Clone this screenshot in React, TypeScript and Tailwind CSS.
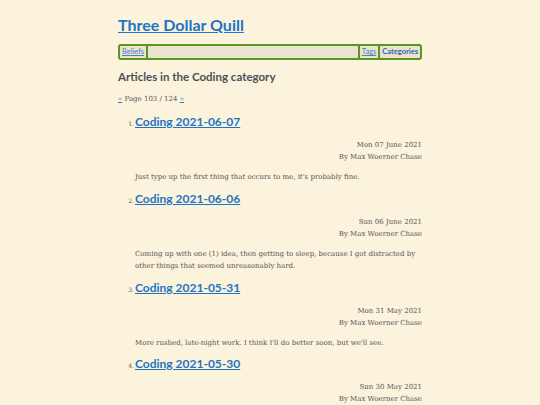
const posts = [
  {
    n: 1,
    title: "Coding 2021-06-07",
    date: "Mon 07 June 2021",
    summary: "Just type up the first thing that occurs to me, it's probably fine.",
  },
  {
    n: 2,
    title: "Coding 2021-06-06",
    date: "Sun 06 June 2021",
    summary:
      "Coming up with one (1) idea, then getting to sleep, because I got distracted by other things that seemed unreasonably hard.",
  },
  {
    n: 3,
    title: "Coding 2021-05-31",
    date: "Mon 31 May 2021",
    summary: "More rushed, late-night work. I think I'll do better soon, but we'll see.",
  },
  {
    n: 4,
    title: "Coding 2021-05-30",
    date: "Sun 30 May 2021",
    summary: "",
  },
];

const sans = "font-['Lato',sans-serif]";
const serif = "font-['DejaVu_Serif',serif]";

const App = () => {
  return (
    <div className="min-h-screen bg-[#fbf3dc] text-[#555]">
      <div className="w-[304px] mx-auto pt-[14px]">
        <h1 className={`${sans} text-[16px] font-bold leading-[22px]`}>
          <a href="#" className="text-[#1f74c4] underline">
            Three Dollar Quill
          </a>
        </h1>

        {/* nav bar */}
        <nav className={`${sans} mt-[8px] flex items-stretch h-[16px] border-2 border-[#5b9621] rounded-[3px] bg-[#ebe3cf] text-[7.5px] leading-[12px]`}>
          <a href="#" className="px-[2px] text-[#4a84c0] underline">
            Beliefs
          </a>
          <span className="w-[2px] bg-[#5b9621]" />
          <span className="flex-1" />
          <span className="w-[2px] bg-[#5b9621]" />
          <a href="#" className="px-[2px] text-[#4a84c0] underline">
            Tags
          </a>
          <span className="w-[2px] bg-[#5b9621]" />
          <a href="#" className="px-[2px] text-[#2a6aad] font-bold">
            Categories
          </a>
        </nav>

        <h2 className={`${sans} mt-[9px] text-[11.5px] font-bold text-[#4a525a] leading-[16px]`}>
          Articles in the Coding category
        </h2>

        <p className={`${serif} mt-[9px] text-[7px] leading-[10px]`}>
          <a href="#" className="text-[#3a7cbf] underline">«</a> Page 103 / 124{" "}
          <a href="#" className="text-[#3a7cbf] underline">»</a>
        </p>

        <ol className="mt-[9px]">
          {posts.map((p) => (
            <li key={p.n} className="mb-[6px]">
              <div className="flex items-baseline">
                <span className={`${serif} w-[17px] text-right pr-[1px] text-[6px]`}>{p.n}.</span>
                <a href="#" className={`${sans} text-[12px] font-bold text-[#1f74c4] underline leading-[18px]`}>
                  {p.title}
                </a>
              </div>
              <div className={`${serif} mt-[8px] text-right text-[7px] leading-[12px]`}>
                <div>{p.date}</div>
                <div>By Max Woerner Chase</div>
              </div>
              {p.summary && (
                <p className={`${serif} mt-[8px] ml-[17px] text-[7px] leading-[12.5px]`}>{p.summary}</p>
              )}
            </li>
          ))}
        </ol>
      </div>
    </div>
  );
};

export default App;
